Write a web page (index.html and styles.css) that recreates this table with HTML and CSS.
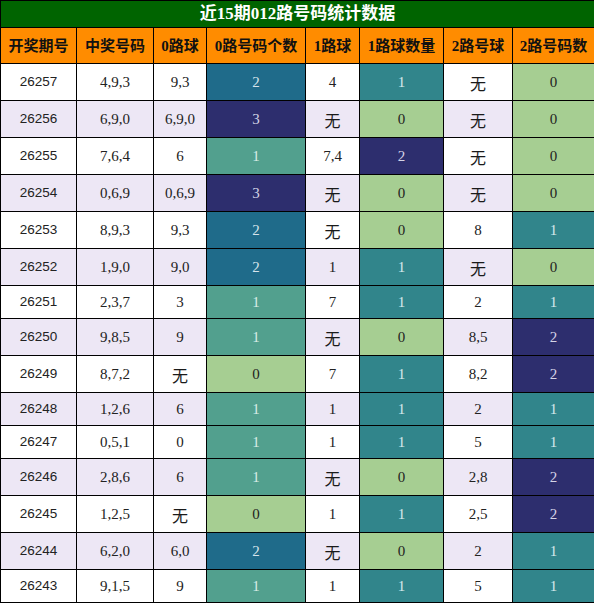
FILE: index.html
```html
<!DOCTYPE html>
<html lang="zh">
<head>
<meta charset="utf-8">
<title>近15期012路号码统计数据</title>
<link rel="stylesheet" href="styles.css">
</head>
<body>
<table class="stats">
  <colgroup>
    <col class="w1"><col class="w2"><col class="w3"><col class="w4"><col class="w5"><col class="w6"><col class="w7"><col class="w8">
  </colgroup>
  <thead>
    <tr><th colspan="8" class="title">近15期012路号码统计数据</th></tr>
    <tr class="head">
      <th>开奖期号</th><th>中奖号码</th><th>0路球</th><th>0路号码个数</th><th>1路球</th><th>1路球数量</th><th>2路号球</th><th>2路号码数</th>
    </tr>
  </thead>
  <tbody>
    <tr><td class="id">26257</td><td>4,9,3</td><td>9,3</td><td class="a2">2</td><td>4</td><td class="b1">1</td><td><span class="none">无</span></td><td class="g0">0</td></tr>
    <tr><td class="id">26256</td><td>6,9,0</td><td>6,9,0</td><td class="a3">3</td><td><span class="none">无</span></td><td class="g0">0</td><td><span class="none">无</span></td><td class="g0">0</td></tr>
    <tr><td class="id">26255</td><td>7,6,4</td><td>6</td><td class="a1">1</td><td>7,4</td><td class="b2">2</td><td><span class="none">无</span></td><td class="g0">0</td></tr>
    <tr><td class="id">26254</td><td>0,6,9</td><td>0,6,9</td><td class="a3">3</td><td><span class="none">无</span></td><td class="g0">0</td><td><span class="none">无</span></td><td class="g0">0</td></tr>
    <tr><td class="id">26253</td><td>8,9,3</td><td>9,3</td><td class="a2">2</td><td><span class="none">无</span></td><td class="g0">0</td><td>8</td><td class="b1">1</td></tr>
    <tr><td class="id">26252</td><td>1,9,0</td><td>9,0</td><td class="a2">2</td><td>1</td><td class="b1">1</td><td><span class="none">无</span></td><td class="g0">0</td></tr>
    <tr><td class="id">26251</td><td>2,3,7</td><td>3</td><td class="a1">1</td><td>7</td><td class="b1">1</td><td>2</td><td class="b1">1</td></tr>
    <tr><td class="id">26250</td><td>9,8,5</td><td>9</td><td class="a1">1</td><td><span class="none">无</span></td><td class="g0">0</td><td>8,5</td><td class="b2">2</td></tr>
    <tr><td class="id">26249</td><td>8,7,2</td><td><span class="none">无</span></td><td class="g0">0</td><td>7</td><td class="b1">1</td><td>8,2</td><td class="b2">2</td></tr>
    <tr><td class="id">26248</td><td>1,2,6</td><td>6</td><td class="a1">1</td><td>1</td><td class="b1">1</td><td>2</td><td class="b1">1</td></tr>
    <tr><td class="id">26247</td><td>0,5,1</td><td>0</td><td class="a1">1</td><td>1</td><td class="b1">1</td><td>5</td><td class="b1">1</td></tr>
    <tr><td class="id">26246</td><td>2,8,6</td><td>6</td><td class="a1">1</td><td><span class="none">无</span></td><td class="g0">0</td><td>2,8</td><td class="b2">2</td></tr>
    <tr><td class="id">26245</td><td>1,2,5</td><td><span class="none">无</span></td><td class="g0">0</td><td>1</td><td class="b1">1</td><td>2,5</td><td class="b2">2</td></tr>
    <tr><td class="id">26244</td><td>6,2,0</td><td>6,0</td><td class="a2">2</td><td><span class="none">无</span></td><td class="g0">0</td><td>2</td><td class="b1">1</td></tr>
    <tr><td class="id">26243</td><td>9,1,5</td><td>9</td><td class="a1">1</td><td>1</td><td class="b1">1</td><td>5</td><td class="b1">1</td></tr>
  </tbody>
</table>
</body>
</html>
```

FILE: styles.css
```css
html, body {
  margin: 0;
  padding: 0;
  background: #ffffff;
}

.stats {
  width: 594px;
  border-collapse: collapse;
  table-layout: fixed;
  font-family: "Liberation Serif", "Noto Sans CJK SC", serif;
  font-size: 15px;
  color: #222222;
}

.w1 { width: 76px; }
.w2 { width: 77px; }
.w3 { width: 53px; }
.w4 { width: 99px; }
.w5 { width: 54px; }
.w6 { width: 84px; }
.w7 { width: 69px; }
.w8 { width: 82px; }

.stats th,
.stats td {
  border: 1px solid #000000;
  text-align: center;
  vertical-align: middle;
  padding: 0;
}

.stats th.title {
  background: #006400;
  color: #ffffff;
  font-size: 17px;
  font-weight: bold;
  height: 26px;
  line-height: 26px;
  font-family: "Liberation Serif", "Noto Sans CJK SC", serif;
}

.head th {
  background: #ff8c00;
  color: #111111;
  font-size: 15px;
  font-weight: bold;
  height: 35px;
  line-height: 20px;
  white-space: nowrap;
}

.stats td {
  height: 32px;
  line-height: 18px;
}

.stats tbody tr:nth-child(even) td {
  background: #ede7f5;
}

.stats td.id {
  font-family: "Liberation Sans", "DejaVu Sans", sans-serif;
  font-size: 13.5px;
  color: #222222;
}

.none {
  display: inline-block;
  font-family: "Noto Sans CJK SC", sans-serif;
  font-size: 16px;
  line-height: 34px;
  padding-top: 2px;
  height: 34px;
  vertical-align: top;
  color: #1a1a1a;
}

.stats tbody tr td.g0 { background: #a6ce92; color: #1e1e1e; }
.stats tbody tr td.a1 { background: #52a08e; color: #d8ece6; }
.stats tbody tr td.a2 { background: #1f6b8a; color: #d6e4ec; }
.stats tbody tr td.a3 { background: #2d2e6e; color: #d4d4e6; }
.stats tbody tr td.b1 { background: #31858b; color: #d6eaec; }
.stats tbody tr td.b2 { background: #2d2e6e; color: #d4d4e6; }
```
